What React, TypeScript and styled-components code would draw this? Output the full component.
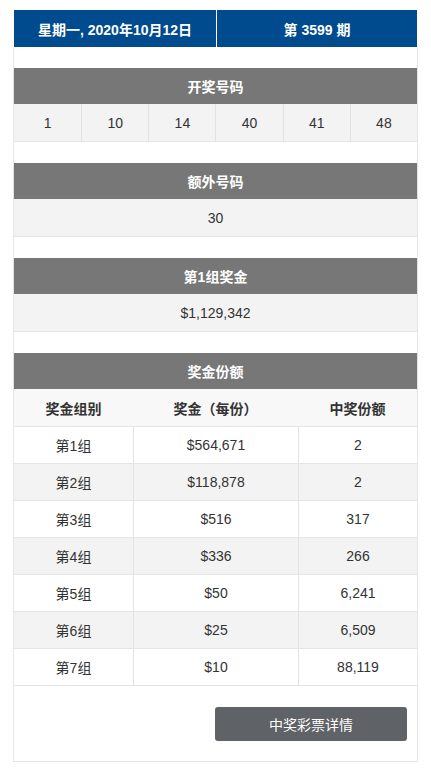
import React from "react";
import styled, { createGlobalStyle } from "styled-components";

const GlobalStyle = createGlobalStyle`
  body {
    margin: 0;
    background: #ffffff;
    font-family: "Liberation Sans", Arial, "Noto Sans CJK SC", sans-serif;
    color: #333333;
  }
`;

const Page = styled.div`
  padding: 10px 14px 10px 14px;
`;

const TopBar = styled.div`
  display: grid;
  grid-template-columns: 202px 1fr;
  height: 37px;
  background-color: #004b8d;
`;

const TopCell = styled.div<{ $divider?: boolean }>`
  display: flex;
  align-items: center;
  justify-content: center;
  color: #ffffff;
  font-size: 14px;
  font-weight: bold;
  border-left: ${(p) => (p.$divider ? "1px solid #ffffff" : "none")};
`;

const Card = styled.div`
  border: 1px solid #e6e6e6;
  border-top: none;
  margin: 0 -1px;
  padding-top: 21px;
`;

const Section = styled.div`
  margin-bottom: 21px;
`;

const SectionTitle = styled.div`
  display: flex;
  align-items: center;
  justify-content: center;
  height: 36px;
  background-color: #777777;
  color: #ffffff;
  font-size: 14px;
  font-weight: bold;
  box-shadow: 0 1px 1px rgba(0, 0, 0, 0.12);
`;

const NumberRow = styled.div<{ $cols: number }>`
  display: grid;
  grid-template-columns: repeat(${(p) => p.$cols}, 1fr);
  background-color: #f3f3f3;
  border-bottom: 1px solid #e6e6e6;
`;

const NumberCell = styled.div`
  display: flex;
  align-items: center;
  justify-content: center;
  height: 37px;
  font-size: 14px;
  color: #333333;
  & + & {
    border-left: 1px solid #e2e2e2;
  }
`;

const Table = styled.div`
  display: grid;
  grid-template-columns: 119px 165px 1fr;
`;

const HeadCell = styled.div`
  display: flex;
  align-items: center;
  justify-content: center;
  height: 37px;
  background-color: #f8f8f8;
  border-bottom: 1px solid #e6e6e6;
  font-size: 14px;
  font-weight: bold;
  color: #333333;
`;

const BodyCell = styled.div<{ $shade: boolean; $first: boolean }>`
  display: flex;
  align-items: center;
  justify-content: center;
  height: 36px;
  background-color: ${(p) => (p.$shade ? "#f3f3f3" : "#ffffff")};
  border-bottom: 1px solid #e6e6e6;
  border-left: ${(p) => (p.$first ? "none" : "1px solid #e2e2e2")};
  font-size: 14px;
  color: #333333;
`;

const Footer = styled.div`
  display: flex;
  justify-content: flex-end;
  padding: 0 10px 20px 0;
`;

const DetailButton = styled.button`
  width: 192px;
  height: 34px;
  border: none;
  border-radius: 3px;
  background-color: #5f6266;
  color: #ffffff;
  font-family: "Liberation Sans", Arial, "Noto Sans CJK SC", sans-serif;
  font-size: 14px;
  cursor: pointer;
`;

const winning = ["1", "10", "14", "40", "41", "48"];

const prizes = [
  ["第1组", "$564,671", "2"],
  ["第2组", "$118,878", "2"],
  ["第3组", "$516", "317"],
  ["第4组", "$336", "266"],
  ["第5组", "$50", "6,241"],
  ["第6组", "$25", "6,509"],
  ["第7组", "$10", "88,119"],
];

export default function App() {
  return (
    <Page>
      <GlobalStyle />
      <TopBar>
        <TopCell>星期一, 2020年10月12日</TopCell>
        <TopCell $divider>第 3599 期</TopCell>
      </TopBar>
      <Card>
        <Section>
          <SectionTitle>开奖号码</SectionTitle>
          <NumberRow $cols={6}>
            {winning.map((n) => (
              <NumberCell key={n}>{n}</NumberCell>
            ))}
          </NumberRow>
        </Section>
        <Section>
          <SectionTitle>额外号码</SectionTitle>
          <NumberRow $cols={1}>
            <NumberCell>30</NumberCell>
          </NumberRow>
        </Section>
        <Section>
          <SectionTitle>第1组奖金</SectionTitle>
          <NumberRow $cols={1}>
            <NumberCell>$1,129,342</NumberCell>
          </NumberRow>
        </Section>
        <Section>
          <SectionTitle>奖金份额</SectionTitle>
          <Table>
            <HeadCell>奖金组别</HeadCell>
            <HeadCell>奖金（每份）</HeadCell>
            <HeadCell>中奖份额</HeadCell>
            {prizes.map((row, i) =>
              row.map((v, j) => (
                <BodyCell key={`${i}-${j}`} $shade={i % 2 === 1} $first={j === 0}>
                  {v}
                </BodyCell>
              ))
            )}
          </Table>
        </Section>
        <Footer>
          <DetailButton>中奖彩票详情</DetailButton>
        </Footer>
      </Card>
    </Page>
  );
}
